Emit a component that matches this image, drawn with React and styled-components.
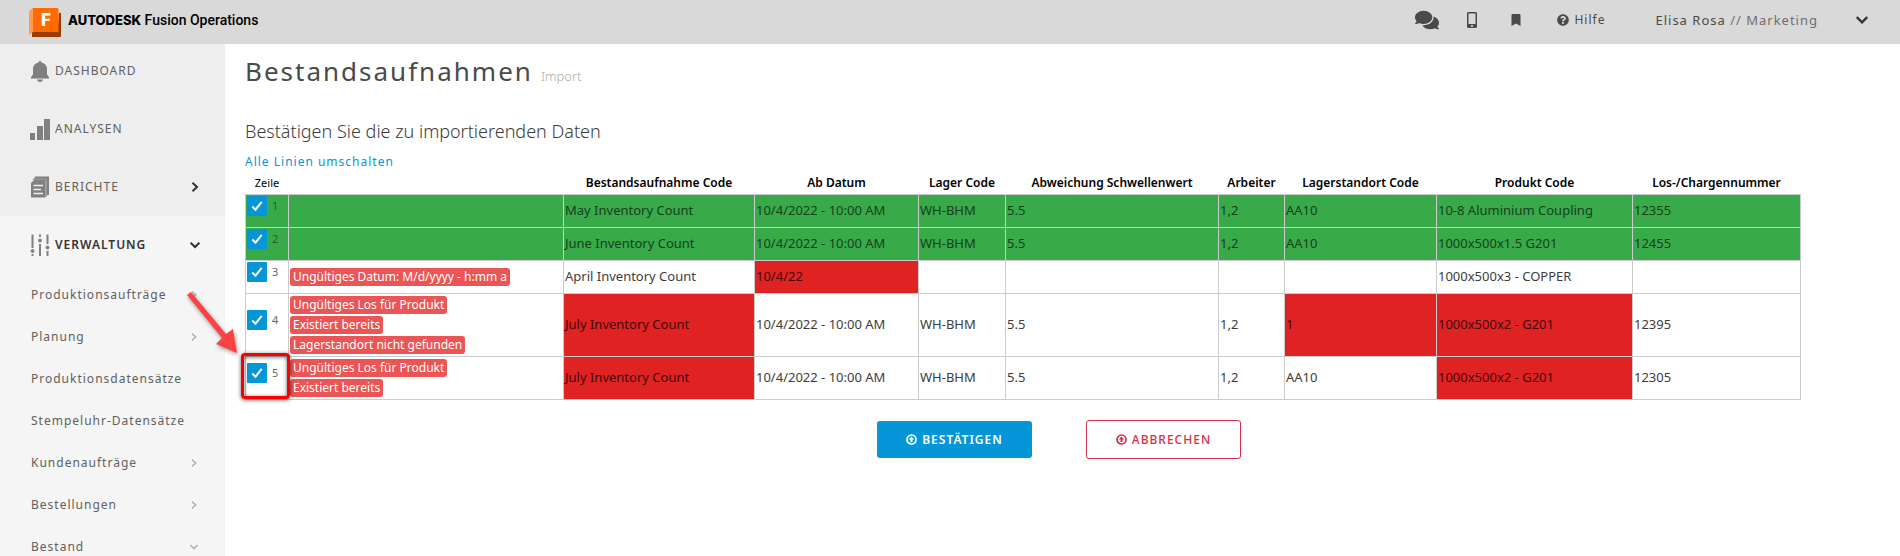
import React from "react";
import styled, { createGlobalStyle, css } from "styled-components";
import { FaComments, FaMobileAlt, FaBookmark, FaQuestionCircle } from "react-icons/fa";

const GlobalStyle = createGlobalStyle`
  *, *::before, *::after { box-sizing: border-box; }
  body {
    margin: 0;
    background: #fff;
    color: #3c3c3c;
    font-family: "Noto Sans", "Open Sans", sans-serif;
    font-size: 13px;
    line-height: 20px;
  }
  h1, h2, p, ul { margin: 0; padding: 0; font-weight: 400; }
  ul { list-style: none; }
  button { font-family: inherit; cursor: pointer; }
  a { text-decoration: none; color: inherit; }
`;

const Page = styled.div`
  display: flex;
  flex-direction: column;
  height: 100vh;
  overflow: hidden;
`;

const TopBar = styled.header`
  display: flex;
  align-items: center;
  flex: none;
  height: 44px;
  padding: 0 32px 4px 29px;
  background: #d9d9d9;
  color: #4a4a4a;
`;

const Brand = styled.a`
  display: flex;
  align-items: center;
  gap: 7px;
  margin-right: auto;
  color: #000;
  font-family: Roboto, sans-serif;
  font-size: 14px;
  font-weight: 500;
  svg { margin-top: 5px; }
`;

const BrandName = styled.span`
  font-family: Inter, sans-serif;
  font-size: 13px;
  font-weight: 800;
`;

const TopButton = styled.button`
  display: flex;
  align-items: center;
  gap: 5px;
  padding: 0;
  margin-right: ${(p) => p.$gap}px;
  border: 0;
  background: none;
  color: inherit;
  font-size: 12px;
  line-height: 20px;
  letter-spacing: 1px;
`;

const UserButton = styled(TopButton)`
  gap: 38px;
  font-size: 13px;
  span span { color: #6e6e6e; }
`;

const Body = styled.div`
  display: flex;
  flex: 1;
  min-height: 0;
`;

const Sidebar = styled.nav`
  flex: none;
  width: 225px;
  overflow-y: auto;
  scrollbar-width: none;
  background: #f5f5f5;
`;

const MainMenu = styled.ul`
  display: flex;
  flex-direction: column;
  gap: 6px;
  padding: 1px 0 3px;
  background: #eee;
`;

const MenuLink = styled.a`
  display: flex;
  align-items: center;
  gap: 5px;
  height: ${(p) => (p.$open ? 58 : 52)}px;
  padding: 0 25px 0 30px;
  color: ${(p) => (p.$open ? "#333" : "#606060")};
  font-size: 12px;
  font-weight: ${(p) => (p.$open ? 600 : 400)};
  letter-spacing: 1px;
  > span { flex: 1; }
`;

const SubLink = styled.a`
  display: flex;
  align-items: center;
  justify-content: space-between;
  height: 42px;
  padding: 0 27px 0 31px;
  color: #606060;
  font-size: 12px;
  letter-spacing: 1px;
`;

const Main = styled.main`
  flex: 1;
  min-width: 0;
  padding: 7px 27px 0 20px;
`;

const TitleRow = styled.div`
  display: flex;
  align-items: baseline;
  gap: 8px;
  color: #aaa;
  font-weight: 300;
`;

const Title = styled.h1`
  color: #4a4a4a;
  font-size: 26px;
  line-height: 40px;
  letter-spacing: 2px;
`;

const Subtitle = styled.h2`
  margin-top: 30px;
  font-size: 18px;
  font-weight: 300;
  line-height: 20px;
`;

const ToggleLink = styled.a`
  display: block;
  margin-top: 11px;
  color: #0696d7;
  font-size: 12px;
  line-height: 20px;
  letter-spacing: 1px;
`;

const TableArea = styled.div`
  margin-right: 72px;
`;

const Table = styled.table`
  width: 100%;
  table-layout: fixed;
  border-collapse: collapse;
`;

const Th = styled.th`
  height: 22px;
  padding: 0;
  color: #000;
  font-size: ${(p) => (p.$small ? 11 : 12)}px;
  font-weight: ${(p) => (p.$small ? 400 : 600)};
  white-space: nowrap;
`;

const cellColors = {
  ok: css`background: #38aa49; color: #17401e;`,
  error: css`background: #df2323; color: #450a0a;`,
};

const Td = styled.td`
  position: relative;
  height: ${(p) => p.$height || 33}px;
  padding: 0 1px;
  border: 1px solid #ccc;
  font-weight: 400;
  white-space: nowrap;
  ${(p) => cellColors[p.$state]}
`;

const DataTd = styled(Td)`
  padding-bottom: 2px;
`;

const RowPick = styled.label`
  display: flex;
  align-items: center;
  gap: 5px;
  margin-bottom: 10px;
  color: ${(p) => (p.$ok ? "#2b5b33" : "#666")};
  font-size: 11px;
  line-height: 20px;
`;

const CheckBox = styled.span`
  display: grid;
  width: 20px;
  height: 20px;
  border-radius: 1px;
  background: #0696d7;
  input, svg { grid-area: 1 / 1; width: 20px; height: 20px; margin: 0; }
  input { appearance: none; }
  input:not(:checked) + svg { visibility: hidden; }
  svg { pointer-events: none; }
`;

const ErrorList = styled.ul`
  display: flex;
  flex-direction: column;
  align-items: flex-start;
  gap: 2px;
`;

const ErrorTag = styled.li`
  padding: 0 3px;
  border-radius: 3px;
  background: #eb5555;
  color: #fff;
  font-size: 12px;
  line-height: 18px;
`;

const Marker = styled.span`
  position: absolute;
  z-index: 2;
  inset: -4px -2px 0 -5px;
  border: 3px solid #f80000;
  border-radius: 4px;
  box-shadow: 0 1px 4px rgba(0, 0, 0, 0.6), inset 0 1px 4px rgba(0, 0, 0, 0.6);
  pointer-events: none;
`;

const MarkerArrow = styled.svg`
  position: absolute;
  right: 48px;
  bottom: 40px;
  filter: drop-shadow(1px 2px 2px rgba(0, 0, 0, 0.4));
`;

const Actions = styled.div`
  display: flex;
  align-items: center;
  justify-content: center;
  gap: 54px;
  margin-top: 20px;
`;

const ActionButton = styled.button`
  display: flex;
  align-items: center;
  justify-content: center;
  gap: 5px;
  width: 155px;
  height: ${(p) => (p.$primary ? 37 : 39)}px;
  padding: 1px 0 0;
  border: ${(p) => (p.$primary ? "0" : "1px solid #d2324b")};
  border-radius: 3px;
  background: ${(p) => (p.$primary ? "#0696d7" : "#fff")};
  color: ${(p) => (p.$primary ? "#fff" : "#d2324b")};
  font-size: 12px;
  font-weight: ${(p) => (p.$primary ? 600 : 500)};
  letter-spacing: 1px;
`;

const Chevron = ({ dir = "right", size = 10, color = "#333" }) => (
  <svg width={size} height={size} viewBox="0 0 10 10" fill="none" stroke={color} strokeWidth="2">
    <path d={dir === "right" ? "M2.5 0.8 L7 5 L2.5 9.2" : "M0.6 2.6 L5 7 L9.4 2.6"} />
  </svg>
);

const Logo = () => (
  <svg width="32" height="29" viewBox="0 0 32 29">
    <path d="M3 24 H28.500 L30 5 H32 V28 Q32 29 31 29 H3 Z" fill="#9c3c00" />
    <path d="M4 0 H28 Q29.500 0 29.500 1.500 V24 H4 Z" fill="#ff6b00" />
    <path d="M0 27 V3 L4 0 V24 Z" fill="#ff9b57" />
    <text x="17" y="18" textAnchor="middle" fill="#fff" fontFamily="Inter, sans-serif" fontSize="17" fontWeight="800">F</text>
  </svg>
);

const BellIcon = () => (
  <svg width="20" height="22" viewBox="0 0 20 22" fill="#808080">
    <path d="M10 1 Q11.300 1 11.500 2.400 C15.500 3.200 17 6 17 9 V14.500 L19 17 V18.500 H1 V17 L3 14.500 V9 C3 6 4.500 3.200 8.500 2.400 Q8.700 1 10 1 Z" />
    <path d="M7 19.500 H13 Q12.500 22 10 22 Q7.500 22 7 19.500 Z" />
  </svg>
);

const BarsIcon = () => (
  <svg width="20" height="22" viewBox="0 0 20 22" fill="#808080">
    <path d="M0 15 H5 V22 H0 Z M7 8 H13 V22 H7 Z M14 1 H20 V22 H14 Z" />
  </svg>
);

const ReportIcon = () => (
  <svg width="20" height="22" viewBox="0 0 20 22">
    <path d="M5 0.500 H19 V19 H17 V3 H4.500 Z" fill="#808080" />
    <path d="M3 2.500 H17 V20.500 H15.500 V4 H3 Z" fill="#969696" />
    <path d="M4 4 H15.500 V21.500 H1 V7 Z" fill="#808080" />
    <path d="M3.500 9.500 H13 M3.500 13.500 H11 M3.500 17.500 H13" stroke="#eee" strokeWidth="1.600" />
  </svg>
);

const SlidersIcon = () => (
  <svg width="20" height="22" viewBox="0 0 20 22" fill="#808080" stroke="#808080">
    <path d="M2.500 0.500 V14 M2.500 20 V22 M10 0.500 V3 M10 10 V22 M17.500 0.500 V10 M17.500 17 V22" strokeWidth="2" />
    <circle cx="2.500" cy="17" r="1.500" />
    <circle cx="10" cy="6.500" r="1.500" />
    <circle cx="17.500" cy="13.500" r="1.500" />
  </svg>
);

const CircleArrowIcon = () => (
  <svg width="11" height="11" viewBox="0 0 11 11" fill="none" stroke="currentColor">
    <circle cx="5.500" cy="5.500" r="4.500" strokeWidth="1.700" />
    <path d="M5.500 2.400 L8.300 5.500 H6.500 V8 H4.500 V5.500 H2.700 Z" fill="currentColor" stroke="none" />
  </svg>
);

const columns = [
  { name: "Zeile", width: 43, small: true },
  { name: "", width: 275 },
  { name: "Bestandsaufnahme Code", width: 191 },
  { name: "Ab Datum", width: 164 },
  { name: "Lager Code", width: 87 },
  { name: "Abweichung Schwellenwert", width: 213 },
  { name: "Arbeiter", width: 66 },
  { name: "Lagerstandort Code", width: 152 },
  { name: "Produkt Code", width: 196 },
  { name: "Los-/Chargennummer", width: 168 },
];

const date = "10/4/2022 - 10:00 AM";

const rows = [
  { ok: true, errors: [], cells: ["May Inventory Count", date, "WH-BHM", "5.5", "1,2", "AA10", "10-8 Aluminium Coupling", "12355"] },
  { ok: true, errors: [], cells: ["June Inventory Count", date, "WH-BHM", "5.5", "1,2", "AA10", "1000x500x1.5 G201", "12455"] },
  { errors: ["Ungültiges Datum: M/d/yyyy - h:mm a"], bad: [1], cells: ["April Inventory Count", "10/4/22", "", "", "", "", "1000x500x3 - COPPER", ""] },
  { errors: ["Ungültiges Los für Produkt", "Existiert bereits", "Lagerstandort nicht gefunden"], bad: [0, 5, 6], height: 63, cells: ["July Inventory Count", date, "WH-BHM", "5.5", "1,2", "1", "1000x500x2 - G201", "12395"] },
  { errors: ["Ungültiges Los für Produkt", "Existiert bereits"], bad: [0, 6], height: 43, marked: true, cells: ["July Inventory Count", date, "WH-BHM", "5.5", "1,2", "AA10", "1000x500x2 - G201", "12305"] },
];

const submenu = [
  ["Produktionsaufträge", "right"],
  ["Planung", "right"],
  ["Produktionsdatensätze"],
  ["Stempeluhr-Datensätze"],
  ["Kundenaufträge", "right"],
  ["Bestellungen", "right"],
  ["Bestand", "down"],
];

const ImportRow = ({ row, number }) => {
  const base = row.ok ? "ok" : undefined;
  return (
    <tr>
      <Td $state={base} $height={row.height}>
        <RowPick $ok={row.ok}>
          <CheckBox>
            <input type="checkbox" defaultChecked />
            <svg viewBox="0 0 20 20" fill="none" stroke="#fff" strokeWidth="2">
              <path d="M5.300 10.500 L8.500 13.700 L14.700 5.800" />
            </svg>
          </CheckBox>
          {number}
        </RowPick>
        {row.marked && (
          <Marker>
            <MarkerArrow width="52" height="64" viewBox="0 0 52 64" fill="#fb4343">
              <path d="M0 3 L4 0 L39 42 L46 37 L50 61 L29 52 L35 46 Z" />
            </MarkerArrow>
          </Marker>
        )}
      </Td>
      <Td $state={base}>
        <ErrorList>
          {row.errors.map((e) => <ErrorTag key={e}>{e}</ErrorTag>)}
        </ErrorList>
      </Td>
      {row.cells.map((text, i) => (
        <DataTd key={i} $state={row.bad?.includes(i) ? "error" : base}>{text}</DataTd>
      ))}
    </tr>
  );
};

export default function App() {
  return (
    <Page>
      <GlobalStyle />
      <TopBar>
        <Brand href="#">
          <Logo />
          <span><BrandName>AUTODESK</BrandName> Fusion Operations</span>
        </Brand>
        <TopButton $gap={25} aria-label="Nachrichten"><FaComments size={24} /></TopButton>
        <TopButton $gap={30} aria-label="Mobil"><FaMobileAlt size={16} /></TopButton>
        <TopButton $gap={35} aria-label="Lesezeichen"><FaBookmark size={12} /></TopButton>
        <TopButton $gap={50}><FaQuestionCircle size={12} />Hilfe</TopButton>
        <UserButton $gap={0}>
          <span>Elisa Rosa <span>// Marketing</span></span>
          <Chevron dir="down" size={12} />
        </UserButton>
      </TopBar>
      <Body>
        <Sidebar>
          <MainMenu>
            <li><MenuLink href="#"><BellIcon /><span>DASHBOARD</span></MenuLink></li>
            <li><MenuLink href="#"><BarsIcon /><span>ANALYSEN</span></MenuLink></li>
            <li><MenuLink href="#"><ReportIcon /><span>BERICHTE</span><Chevron /></MenuLink></li>
          </MainMenu>
          <MenuLink href="#" $open><SlidersIcon /><span>VERWALTUNG</span><Chevron dir="down" /></MenuLink>
          <ul>
            {submenu.map(([name, dir]) => (
              <li key={name}>
                <SubLink href="#">{name}{dir && <Chevron dir={dir} size={8} color="#b4b4b4" />}</SubLink>
              </li>
            ))}
          </ul>
        </Sidebar>
        <Main>
          <TitleRow><Title>Bestandsaufnahmen</Title><span>Import</span></TitleRow>
          <Subtitle>Bestätigen Sie die zu importierenden Daten</Subtitle>
          <ToggleLink href="#">Alle Linien umschalten</ToggleLink>
          <TableArea>
            <Table>
              <colgroup>
                {columns.map((c, i) => <col key={i} width={c.width} />)}
              </colgroup>
              <thead>
                <tr>{columns.map((c, i) => <Th key={i} $small={c.small}>{c.name}</Th>)}</tr>
              </thead>
              <tbody>
                {rows.map((row, i) => <ImportRow key={i} row={row} number={i + 1} />)}
              </tbody>
            </Table>
          </TableArea>
          <Actions>
            <ActionButton $primary><CircleArrowIcon />BESTÄTIGEN</ActionButton>
            <ActionButton><CircleArrowIcon />ABBRECHEN</ActionButton>
          </Actions>
        </Main>
      </Body>
    </Page>
  );
}
